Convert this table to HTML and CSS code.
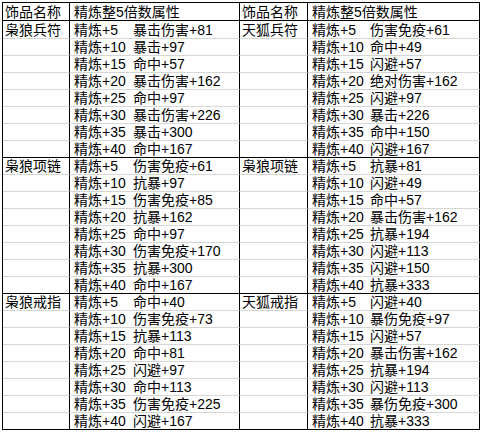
FILE: index.html
```html
<!DOCTYPE html>
<html lang="zh-CN">
<head>
<meta charset="utf-8">
<title>饰品精炼属性</title>
<link rel="stylesheet" href="styles.css">
</head>
<body>
<table class="sheet">
  <colgroup>
    <col class="c-name"><col class="c-lvl"><col class="c-val">
    <col class="c-name2"><col class="c-lvl2"><col class="c-val2">
  </colgroup>
  <thead>
    <tr class="head">
      <td class="name">饰品名称</td><td class="lvl" colspan="2">精炼整5倍数属性</td>
      <td class="name">饰品名称</td><td class="lvl" colspan="2">精炼整5倍数属性</td>
    </tr>
  </thead>
  <tbody id="body"></tbody>
</table>
<script src="app.js"></script>
</body>
</html>
```
FILE: styles.css
```css
html, body { margin: 0; padding: 0; background: #fff; }
body { padding: 2px 0 0 2px; }
.sheet {
  border-collapse: separate;
  border-spacing: 0;
  table-layout: fixed;
  width: 478px;
  border-top: 1px solid #000;
  border-left: 1px solid #000;
  font-family: "Liberation Sans", "Noto Sans CJK SC", sans-serif;
  font-size: 14px;
  color: #000;
}
.c-name { width: 67px; }
.c-lvl { width: 61px; }
.c-val { width: 109px; }
.c-name2 { width: 68px; }
.c-lvl2 { width: 60px; }
.c-val2 { width: 112px; }
.sheet td {
  height: 16px;
  line-height: 16px;
  padding: 0;
  white-space: nowrap;
  overflow: hidden;
  border-bottom: 1px solid #d6d6d6;
  vertical-align: middle;
}
.sheet .head td { height: 17px; border-bottom-color: #000; }
.sheet tr.tall td { height: 17px; }
.sheet td.name { padding-left: 2px; border-right: 1px solid #000; }
.sheet td.lvl { padding-left: 4px; }
.sheet td.val { padding-left: 2px; border-right: 1px solid #000; }
.sheet .head td.lvl { border-right: 1px solid #000; }
.sheet tr.last td { border-bottom-color: #000; }
```
FILE: app.js
```js
const left = [
  ["枭狼兵符", ["暴击伤害+81","暴击+97","命中+57","暴击伤害+162","命中+97","暴击伤害+226","暴击+300","命中+167"]],
  ["枭狼项链", ["伤害免疫+61","抗暴+97","伤害免疫+85","抗暴+162","命中+97","伤害免疫+170","抗暴+300","命中+167"]],
  ["枭狼戒指", ["命中+40","伤害免疫+73","抗暴+113","命中+81","闪避+97","命中+113","伤害免疫+225","闪避+167"]]
];
const right = [
  ["天狐兵符", ["伤害免疫+61","命中+49","闪避+57","绝对伤害+162","闪避+97","暴击+226","命中+150","闪避+167"]],
  ["枭狼项链", ["抗暴+81","闪避+49","命中+57","暴击伤害+162","抗暴+194","闪避+113","闪避+150","抗暴+333"]],
  ["天狐戒指", ["闪避+40","暴伤免疫+97","闪避+57","暴击伤害+162","抗暴+194","闪避+113","暴伤免疫+300","抗暴+333"]]
];
const body = document.getElementById("body");
let html = "";
for (let g = 0; g < 3; g++) {
  for (let i = 0; i < 8; i++) {
    const lv = "精炼+" + (5 * (i + 1));
    const cls = [];
    if (i === 7) cls.push("last");
    if (g === 0 && i === 0) cls.push("tall");
    html += '<tr' + (cls.length ? ' class="' + cls.join(" ") + '"' : '') + '>' +
      '<td class="name">' + (i === 0 ? left[g][0] : '') + '</td>' +
      '<td class="lvl">' + lv + '</td>' +
      '<td class="val">' + left[g][1][i] + '</td>' +
      '<td class="name">' + (i === 0 ? right[g][0] : '') + '</td>' +
      '<td class="lvl">' + lv + '</td>' +
      '<td class="val">' + right[g][1][i] + '</td></tr>';
  }
}
body.innerHTML = html;
```
